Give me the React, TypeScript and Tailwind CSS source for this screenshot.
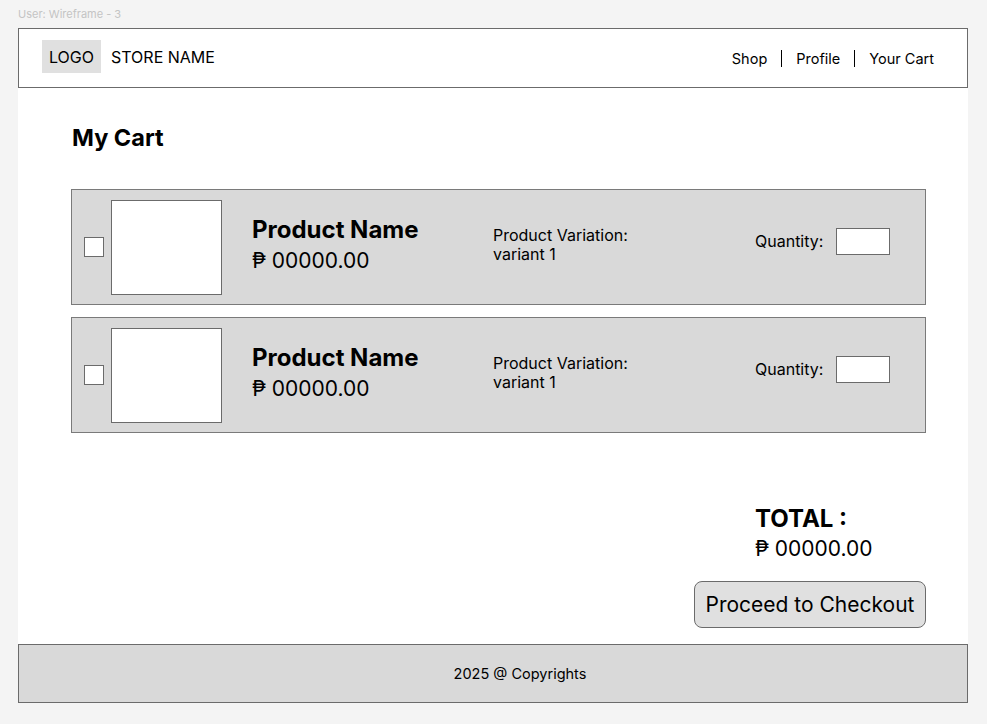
import React from "react";

function CartItem() {
  return (
    <div className="flex items-start h-[116px] bg-[#d9d9d9] border border-[#7a7a7a] pl-[12px] pt-[10px]">
      <div className="mt-[37px] w-[20px] h-[20px] bg-white border border-[#6b6b6b] shrink-0" />
      <div className="ml-[7px] w-[111px] h-[95px] bg-white border border-[#6b6b6b] shrink-0" />
      <div className="ml-[30px] w-[241px] mt-[15px] flex flex-col">
        <div className="text-[24px] leading-[29px] font-bold text-black">Product Name</div>
        <div className="text-[21px] leading-[25px] mt-[4px] text-black">₱ 00000.00</div>
      </div>
      <div className="w-[262px] mt-[26px] text-[16px] leading-[19px] text-black">
        <div>Product Variation:</div>
        <div>variant 1</div>
      </div>
      <div className="mt-[28px] flex items-center">
        <span className="text-[16px] leading-[19px] text-black">Quantity:</span>
        <div className="ml-[13px] w-[54px] h-[27px] bg-white border border-[#6b6b6b]" />
      </div>
    </div>
  );
}

export default function App() {
  return (
    <div
      className="min-h-[724px] w-[987px] bg-[#f4f4f4] text-black"
      style={{ fontFamily: "Inter, 'Noto Sans', sans-serif" }}
    >
      <div className="h-[28px] pl-[18px] pt-[7px] text-[11px] leading-[14px] text-[#c4c4c4]">
        User: Wireframe - 3
      </div>
      <div className="ml-[18px] w-[950px]">
        <header className="h-[60px] bg-white border border-[#6b6b6b] flex items-center justify-between pl-[23px] pr-[33px]">
          <div className="flex items-center mb-[3px]">
            <div className="w-[59px] h-[33px] bg-[#e0e0e0] flex items-center justify-center text-[16px]">
              LOGO
            </div>
            <span className="ml-[10px] text-[16px]">STORE NAME</span>
          </div>
          <nav className="flex items-center text-[14.5px] mt-[1px]">
            <span>Shop</span>
            <span className="mx-[14px] w-[1px] h-[17px] bg-black" />
            <span>Profile</span>
            <span className="mx-[14px] w-[1px] h-[17px] bg-black" />
            <span>Your Cart</span>
          </nav>
        </header>
        <main className="bg-white pl-[53px] pr-[42px] pt-[34px] pb-[16px]">
          <h1 className="text-[23.5px] leading-[32px] font-bold pl-[1px]">My Cart</h1>
          <div className="mt-[35px] flex flex-col gap-[12px]">
            <CartItem />
            <CartItem />
          </div>
          <div className="flex justify-end mt-[71px]">
            <div className="w-[232px] flex flex-col">
              <div className="pl-[61px]">
                <div className="text-[24px] leading-[29px] font-bold">TOTAL :</div>
                <div className="text-[21px] leading-[25px] mt-[3px]">₱ 00000.00</div>
              </div>
              <button className="mt-[20px] w-[232px] h-[47px] bg-[#e0e0e0] border border-[#6b6b6b] rounded-[8px] text-[21px] text-black">
                Proceed to Checkout
              </button>
            </div>
          </div>
        </main>
        <footer className="h-[59px] bg-[#d9d9d9] border border-[#6b6b6b] flex items-center justify-center pl-[54px] text-[14.5px]">
          2025 @ Copyrights
        </footer>
      </div>
    </div>
  );
}
